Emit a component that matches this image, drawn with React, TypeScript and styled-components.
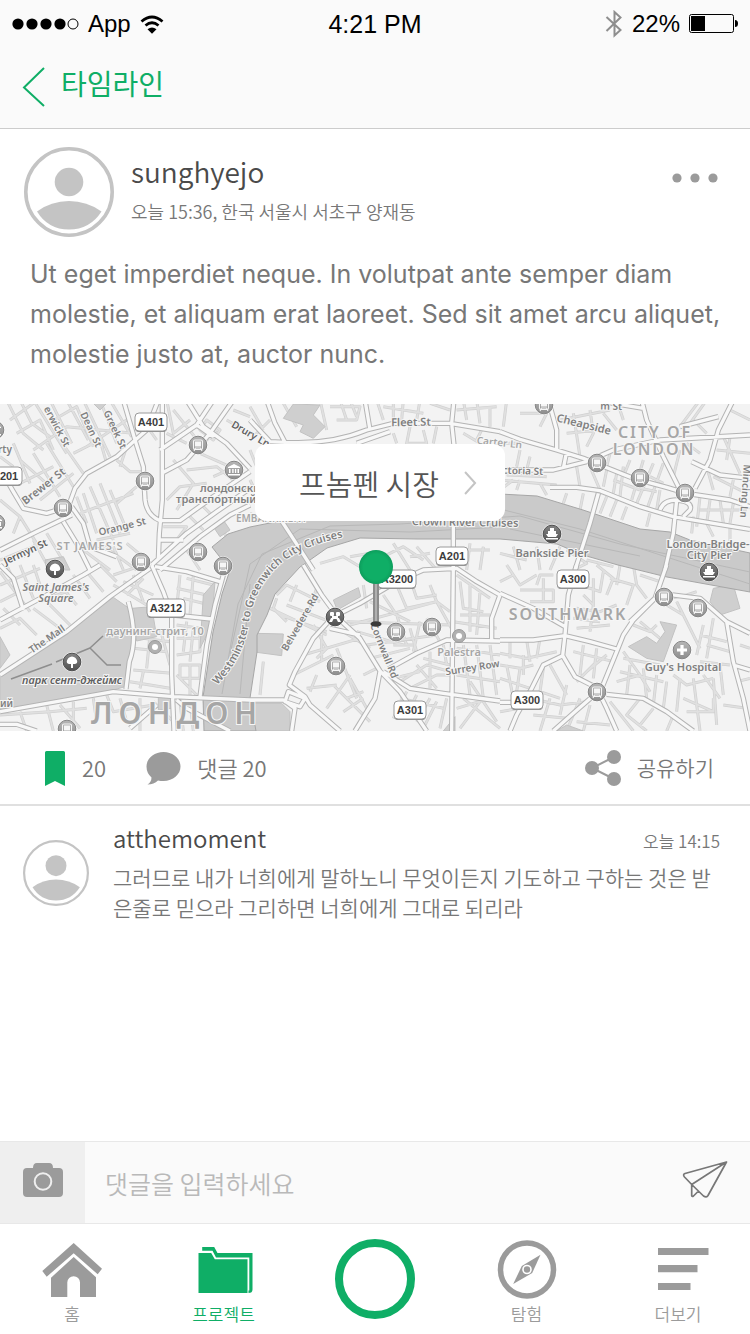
import React from "react";
import styled, { createGlobalStyle, css } from "styled-components";

const green = "#0fae66";
const grey = "#9b9b9b";
const korean = '"Noto Sans CJK KR", "Noto Sans", sans-serif';

const GlobalStyle = createGlobalStyle`
  *, *::before, *::after { box-sizing: border-box; }
  body {
    margin: 0;
    background: #ffffff;
    color: #777777;
    font-family: ${korean};
    font-weight: 350;
  }
  button, input { font: inherit; color: inherit; }
  p, h1, h2 { margin: 0; font-weight: inherit; }
`;

const Screen = styled.div`
  display: flex;
  flex-direction: column;
  min-height: 100vh;
`;

const buttonReset = css`
  border: 0;
  padding: 0;
  background: none;
  cursor: pointer;
`;

/* Header */

const Header = styled.header`
  background: #fafafa;
  border-bottom: 1px solid #cccccc;
`;

const StatusBar = styled.div`
  display: grid;
  grid-template-columns: 1fr auto 1fr;
  align-items: center;
  height: 48px;
  padding: 0 12px;
  color: #000000;
  font-family: "Liberation Sans", Arial, sans-serif;
  font-weight: 400;
  font-size: 24px;
  line-height: 32px;
`;

const StatusGroup = styled.div<{ $end?: boolean }>`
  display: flex;
  align-items: center;
  justify-content: ${(p) => (p.$end ? "flex-end" : "flex-start")};
  gap: 9px;
`;

const Clock = styled.span`
  font-size: 25px;
`;

const NavBar = styled.div`
  display: flex;
  align-items: center;
  height: 80px;
  padding: 0 22px;
`;

const BackButton = styled.button`
  ${buttonReset}
  display: flex;
  align-items: center;
  gap: 15px;
  color: ${green};
  font-size: 28px;
  font-weight: 400;
  line-height: 40px;
  padding-bottom: 2px;
`;

const BackLabel = styled.span`
  padding-bottom: 8px;
`;

/* Post */

const PostHeader = styled.div`
  display: flex;
  gap: 17px;
  padding: 18px 32px 0 24px;
`;

const Avatar = styled.svg`
  flex: none;
  display: block;
`;

const Author = styled.div`
  flex: 1;
  padding-top: 4px;
`;

const AuthorName = styled.h1`
  color: #4a4a4a;
  font-size: 28px;
  line-height: 40px;
`;

const Meta = styled.p`
  font-size: 18px;
  line-height: 24px;
  padding-top: 8px;
`;

const MoreButton = styled.button`
  ${buttonReset}
  align-self: flex-start;
  padding: 21px 0;
`;

const PostText = styled.p`
  padding: 17px 24px 30px 30px;
  font-family: Inter, "Liberation Sans", sans-serif;
  font-weight: 400;
  font-size: 25px;
  line-height: 40px;
`;

/* Map */

const MapPanel = styled.div`
  position: relative;
`;

const MapDrawing = styled.svg`
  display: block;
  width: 100%;
  height: 327px;
`;

const PlaceButton = styled.button`
  ${buttonReset}
  position: absolute;
  top: 40px;
  left: 50%;
  transform: translateX(-50%);
  margin-left: 5px;
  display: flex;
  align-items: center;
  gap: 24px;
  height: 77px;
  padding: 0 28px 0 44px;
  border-radius: 12px;
  background: #ffffff;
  color: #555555;
  font-size: 29px;
  white-space: nowrap;
`;

/* Actions */

const Actions = styled.div`
  display: flex;
  align-items: center;
  height: 75px;
  padding: 0 36px 0 44px;
  border-bottom: 2px solid #e0e0e0;
`;

const ActionButton = styled.button<{ $push?: boolean }>`
  ${buttonReset}
  display: flex;
  align-items: center;
  gap: 16px;
  margin-left: ${(p) => (p.$push ? "auto" : "0")};
  margin-right: ${(p) => (p.$push ? "0" : "40px")};
  font-size: ${(p) => (p.$push ? "21px" : "22px")};
  line-height: 32px;
`;

const ActionLabel = styled.span`
  padding-bottom: 2px;
`;

/* Comments */

const Comments = styled.section`
  flex: 1;
  padding: 15px 30px 18px 23px;
`;

const Comment = styled.article`
  display: flex;
  align-items: flex-start;
  gap: 24px;
`;

const CommentAvatar = styled.div`
  padding-top: 19px;
`;

const CommentBody = styled.div`
  flex: 1;
`;

const CommentHead = styled.div`
  display: flex;
  align-items: baseline;
  justify-content: space-between;
  line-height: 34px;
`;

const CommentName = styled.h2`
  color: #4a4a4a;
  font-size: 24px;
`;

const CommentTime = styled.time`
  font-size: 17px;
`;

const CommentText = styled.p`
  padding-top: 4px;
  font-size: 21px;
  line-height: 30px;
`;

/* Composer */

const Composer = styled.form`
  display: flex;
  height: 83px;
  border-top: 1px solid #e8e8e8;
  border-bottom: 1px solid #e8e8e8;
  background: #fafafa;
`;

const CameraButton = styled.button`
  ${buttonReset}
  flex: none;
  width: 85px;
  background: #efefef;
`;

const CommentInput = styled.input`
  flex: 1;
  min-width: 0;
  border: 0;
  outline: 0;
  padding: 0 20px;
  background: transparent;
  font-size: 25px;
  &::placeholder { color: #b9b9b9; opacity: 1; }
`;

const SendButton = styled.button`
  ${buttonReset}
  flex: none;
  padding: 0 22px;
`;

/* Tab bar */

const TabBar = styled.nav`
  display: flex;
  justify-content: space-between;
  height: 110px;
  padding: 15px 19px 0;
`;

const Tab = styled.a<{ $active?: boolean }>`
  display: flex;
  flex-direction: column;
  align-items: center;
  width: 106px;
  color: ${(p) => (p.$active ? green : grey)};
  font-size: 17px;
  line-height: 24px;
  text-decoration: none;
  gap: 3px;
`;

const RecordSlot = styled.div`
  display: flex;
  justify-content: center;
  width: 106px;
`;

const RecordButton = styled.button`
  ${buttonReset}
  width: 80px;
  height: 80px;
  border: 8px solid ${green};
  border-radius: 50%;
`;

const TabIcon = styled.svg.attrs({ width: 60, height: 60, viewBox: "0 0 60 60", "aria-hidden": true })`
  display: block;
  overflow: visible;
  fill: currentColor;
`;

function UserPicture({ size, ring }: { size: number; ring: number }) {
  return (
    <Avatar width={size} height={size} viewBox="0 0 90 90" aria-hidden>
      <circle cx="45" cy="45" r={45 - ring / 2} fill="#fff" stroke="#c4c4c4" strokeWidth={ring} />
      <circle cx="45" cy="35" r="14.3" fill="#c4c4c4" />
      <path d="M13 64.500Q27 54 45 54T77.500 64.500Q66 82.500 45 82.500T13 64.500Z" fill="#c4c4c4" />
    </Avatar>
  );
}

/* City map: six tiles of 750 x 510 units, drawn at a third of their size. */

type Tile = { x: number; y: number; minor: string; major: string; blocks?: string };

const tiles: Tile[] = [
  {
    x: 0,
    y: -4,
    major:
      "M370 0L405 120L430 200L435 300Q440 345 480 362H540L640 290L750 215M487 0V300L478 400L475 480M475 0L440 90L400 125L350 170L260 220L225 265L205 320L140 340L70 325L40 275L20 240M215 320L250 370L270 440L350 470M215 345L110 395L0 450M560 0L610 80L680 130L750 205M480 150L590 75L640 0M485 220L560 180L630 100L700 0M455 495L560 400L650 335L750 265M480 510L600 410L690 345L750 315M475 420H550M190 365L230 430L270 510M590 75L640 110",
    minor:
      "M20 0L70 100L130 150M60 0L95 70L150 110M30 60L100 10M50 100L120 60L160 150M100 0L200 160M150 0L215 130M160 60L230 20L280 140M200 0L265 120M250 0L330 170M300 0L350 130M330 0L395 110M100 150L200 80L400 100M40 130L90 250M60 180L150 260M100 160L180 290M140 130L220 260M180 120L250 220M220 160L300 120L320 190M260 140L380 60M160 200L60 250M120 300L220 220M230 290L260 370M250 280L290 400M270 260L340 420M300 250L360 400M330 270L380 390M350 310L410 260M240 340L400 280M290 420L390 400M350 180L390 215H430M380 140L360 200M420 50L470 120M500 0L520 100L570 60M500 100L560 130M520 180L580 250L530 330M500 300L540 260L620 250M560 210L650 200L700 240M600 160L690 200M640 230L730 190M600 310L640 350M560 340L610 390M490 380L560 380L530 420M520 30L600 130M650 90L600 140M680 60L750 100M700 30L750 50M620 60L660 90L640 120L600 90ZM0 170L40 200M0 300L60 350L40 400M60 350L110 430L70 470M100 420L150 510M140 400L200 500M0 480L100 440M300 430L410 510M380 430L440 480M250 450L330 510M340 440L370 510M560 450L600 510M650 370L680 410",
    blocks: "M270 0H330L300 30ZM640 380L670 360L690 390L660 410ZM135 480L190 470L210 510H140Z",
  },
  {
    x: 250,
    y: -4,
    major:
      "M50 0L75 70L105 127M0 60L60 125L105 127Q240 135 350 90L430 70H600L750 95M345 0L360 90M612 0L605 70L612 135M95 363L145 440L190 510M610 360V510M320 130L420 95",
    minor:
      "M0 20L40 90M10 110L60 60M100 10L140 80M210 0L230 90M240 20L330 20L320 60L260 60M270 0L290 60M300 0L320 50M380 0L400 60M400 20L520 40M430 0V60M460 0L455 60M510 0L500 60M540 10L600 30M430 100L440 130M480 80L470 130H530L520 90M560 80L550 130M640 0L650 60M620 30L740 20M680 0L690 70M700 80L680 120M640 100L690 130M720 20V80M0 150L20 200M0 240L20 280M0 340L60 370M300 470L360 460M400 470L460 440L520 480M430 430L480 510M500 440L560 510M350 510L420 490M640 450H720M660 430L650 510M700 440L690 510M480 470L540 460M210 490L280 470L330 500",
    blocks: "M100 55L130 12L210 15L190 45L225 80L190 115L150 95L160 75Z",
  },
  {
    x: 500,
    y: -4,
    major:
      "M0 95L60 118L170 150L250 175L300 195L400 235L500 262L560 280L690 300L750 320M0 210H160L260 185L340 150L480 120L750 105M425 0L440 60L490 170L540 270M700 0L655 90L630 180L585 265M150 262H230L300 272L420 320L520 350L640 370L750 388M295 280L270 370L225 510M530 300L520 400L495 510M145 0L170 90V150M280 0L430 25M540 80L655 50M575 185L660 225L750 235M200 155L190 205M480 330Q490 300 530 300Q580 305 570 330L550 350",
    minor:
      "M20 0L10 80M60 40H140L120 80M0 130H60M60 150L50 200M90 170L80 210M0 240L170 255M20 225L140 230M60 240L50 270M120 250L140 285M0 270L40 240M180 60L330 30M200 100L300 90M220 40L240 170M270 30L280 100L260 140M310 40L350 90M350 0L370 60M330 160L320 200M230 200L240 260M270 200L300 270M320 210L310 260M350 220L340 280M370 200L360 290M390 180L370 230M430 180L395 300M460 190L410 310M490 190L440 330M450 230L490 250M400 260L470 275M480 270L470 330M340 240L420 270M540 150L520 230M560 130L600 160M580 60L620 100M620 0L570 70M600 0L540 80M690 30L750 60M670 110L720 220M650 150L750 160M690 110L680 180M620 200L640 270M700 240L690 290M640 230L740 280M600 290L590 380M630 300L620 370M660 300L670 370M700 310L690 370M600 330H740M580 350L575 400M620 370L640 410M690 380V430M250 280L240 330M200 280L190 310M320 290L300 340M350 300L330 350M380 320L365 360M450 340L440 380M180 440L150 510M110 440L120 510M40 440L60 510M0 460L80 480M200 450L260 490L220 510M260 480L340 500",
  },
  {
    x: 0,
    y: 161,
    major:
      "M455 0L490 80L515 150V330L522 498M465 5L560 20L660 50M670 30L645 120L620 240L600 395M0 330L200 200L330 95L450 10M0 440L340 380L520 395L750 405M385 110Q415 220 388 290L378 372M520 150L635 162M70 135L40 40L0 0M0 165L140 90L250 30L300 0M0 478H50L110 498M530 405L560 430L690 498M470 420L390 490",
    minor:
      "M20 0L60 90M60 0L100 100M100 0L120 60M0 60L120 10M0 110L60 80M120 110L250 60M180 60L230 120M220 30L270 100M260 20L310 80M300 0L350 50M340 30L400 10M340 60L440 120M370 50L460 90M400 30L430 110M430 40L380 90M0 20L90 140M10 130L60 180M100 130L180 190M140 110L210 180M0 190L60 160L110 210M540 30L530 130M580 30L570 150M530 70L620 90M550 100L630 120M560 40L640 60M530 180L600 190V260L530 270M560 170L550 260M580 190L570 290M530 220H610M540 300H600V340H540ZM530 330L590 390M570 300V390M400 250L500 260M400 315L515 325M390 350L510 370M430 320L420 370M220 410V470M180 420L240 490M140 420L160 498M60 440L80 498M0 450L150 440L260 430M280 400L290 470M320 390L340 440L460 420M360 400L380 470M420 400V498M460 410L520 470M540 410L550 498M570 410L580 498M480 190L510 300M430 220L510 230M450 210L440 310",
    blocks:
      "M340 97L390 132L405 210L380 300L375 365L340 375L0 435V325L200 200ZM395 130L455 125L470 215L410 228ZM475 395H515V430L475 435ZM645 50L635 180L600 250L610 90ZM0 215L30 270L0 310ZM610 410H750V498H620Z",
  },
  {
    x: 250,
    y: 161,
    major:
      "M160 0L215 90L270 165L330 220L390 318L450 380L530 498M240 165L190 220L135 320L118 360L165 395L180 420L270 498M260 150L330 115L440 50L520 15L620 10L680 50L750 90M610 0L605 498M415 312L500 265L590 225L750 228M400 320L480 370L580 385L750 408M390 320L375 400L315 498M0 405H100L135 430L125 498M105 410L115 380L165 400L150 425ZM750 90L725 160V225M240 190L330 210",
    minor:
      "M80 90L110 60L210 110M90 150L230 200M80 100L70 130L110 170M110 120L240 170M140 60L120 110M60 130L230 210M200 70L180 130M215 210V290M190 180L230 250L200 280M160 270L330 220M130 330L250 270M280 200L360 250M260 250L320 400M170 370L260 360M200 330L180 380M230 430L300 330M250 360L360 470M290 400L340 380M340 330L380 310M300 340L350 430M280 440L340 400M350 130L340 60M290 170L600 180M300 180L560 110L540 60M320 200L460 240M360 110L480 170M400 90L440 150M440 60L470 130M480 40L500 100L560 90M470 130L560 110L600 140M480 190L500 260M440 150L470 240M510 170L490 260M530 160L570 230M560 110L610 200M360 280L480 250M430 240H490M350 240L560 210M620 30L720 100M630 50L640 130L700 140M660 60V200M690 80L680 210M630 150H720M610 170L740 190M450 350L530 300L600 320M480 370L560 330H610M430 340L510 320M500 300L560 370M520 280L600 300M540 260V370M580 240L590 300M450 400L580 430M470 380L430 460M500 390L470 450M540 400L500 470M560 410L520 490M590 400L570 490M620 250L750 270M640 240L660 390M680 240L700 400M720 240L740 390M620 330L750 350M640 400L750 490M660 350L740 470M620 430L720 400M630 490L690 410M40 290L30 390M60 430L90 470M20 450V498",
    blocks: "M250 105L325 68L332 95L262 135ZM20 205L100 207L95 272L20 262ZM580 498L615 455V498ZM0 415H95L120 440V498H0Z",
  },
  {
    x: 500,
    y: 161,
    major:
      "M230 0L205 90L195 210L188 272M188 272L130 300L90 380L50 450L30 498M188 272L225 335L290 368L320 430L350 498M500 0L465 100L400 165L370 210L350 260L305 370M300 375L225 440L160 498M320 388L430 400L500 440L580 498M0 225H100L195 212L270 230L350 252M505 88L600 100L680 170L750 205M680 170L700 290L730 400L750 498M700 300L750 315M0 85L100 130L195 185M0 412H40M390 170L470 95",
    minor:
      "M20 0L60 60L110 30M0 50L40 30M60 75H160V110H90M110 60L120 30H160M130 40V110M240 60L300 80L310 20M250 90L280 120V40M290 0L340 40L320 90M330 40L400 60L380 120M360 0L350 60M400 0L410 60L440 100M420 30L480 50M230 130L300 140L350 120M220 160L300 170M230 190L330 180M280 120L270 200M0 265L80 280L170 260M30 230V280M80 225L90 290M120 220L110 280M0 300L60 310L100 300M0 340L90 370M20 300L40 400M60 310L50 380M70 270V330M0 440L60 430M90 400L180 420L260 410M130 310L120 380L180 400M150 300L200 390M100 450L200 460M150 400L120 498M200 360L180 450M230 350L290 290M220 260L340 290M250 240L240 330M290 250L280 340M320 270L260 320M240 400L200 498M270 420L250 498M230 470L330 480M330 410L400 498M350 350L420 330L450 380M370 280L480 300M360 320L490 350M390 300L380 390M430 310L440 400M470 330L460 420M370 260L420 330M500 350L490 430M520 330L560 360L640 340M540 340L530 440M580 340L600 498M610 330L660 400M560 440H640V400M550 400L640 440M640 340L650 480M660 300L670 390M600 290L690 300M620 240L690 260M640 160L620 280M600 210L680 230M610 180L590 270M550 150L600 250M500 120L550 150L530 110M510 100L560 90L590 80M400 180L450 200L470 180M420 170L480 220M700 40L660 130M720 240L750 250M710 350L750 340M670 420L740 430M420 400L380 450L440 498M460 430L420 480M520 450L500 498",
    blocks: "M385 245L440 215L470 235L495 200L480 170L530 180L490 290L440 280ZM640 70L700 60L720 130L660 150L630 110ZM170 498H250L200 480Z",
  },
];

type LabelProps = {
  x: number;
  y: number;
  children: string;
  r?: number;
  size?: number;
  tone?: "dark" | "mid" | "light";
  italic?: boolean;
  anchor?: "start" | "middle" | "end";
  track?: number;
};

const tones = { dark: "#606060", mid: "#808080", light: "#a6a6a6" };

const MapText = styled.text`
  font-family: "Noto Sans", sans-serif;
  font-weight: 600;
  paint-order: stroke;
  stroke: #f6f6f6;
  stroke-width: 2px;
`;

function Label({ x, y, children, r = 0, size = 10, tone = "mid", italic, anchor = "middle", track }: LabelProps) {
  return (
    <MapText
      transform={`translate(${x} ${y}) rotate(${r})`}
      textAnchor={anchor}
      fontSize={size}
      fill={tones[tone]}
      fontStyle={italic ? "italic" : undefined}
      letterSpacing={track}
    >
      {children}
    </MapText>
  );
}

function Shield({ x, y, children }: { x: number; y: number; children: string }) {
  const w = children.length * 6 + 8;
  return (
    <g transform={`translate(${x} ${y})`}>
      <rect x={-w / 2} y="-8" width={w} height="18" rx="4" fill="#8d8d8d" />
      <rect x={-w / 2} y="-9" width={w} height="18" rx="4" fill="#fff" stroke="#9a9a9a" />
      <text y="4" textAnchor="middle" fontFamily="Liberation Sans, Arial, sans-serif" fontWeight="700" fontSize="11" fill="#3c3c3c">
        {children}
      </text>
    </g>
  );
}

type PoiKind = "train" | "tree" | "ship" | "museum" | "cross" | "dot" | "hub";

const darkKinds: PoiKind[] = ["tree", "ship", "hub"];

function Poi({ x, y, kind }: { x: number; y: number; kind: PoiKind }) {
  if (kind === "dot") {
    return (
      <g transform={`translate(${x} ${y})`}>
        <circle r="6.500" fill="#b0b0b0" stroke="#999" />
        <circle r="3" fill="#fff" />
      </g>
    );
  }
  return (
    <g transform={`translate(${x} ${y})`}>
      <circle r="10" fill="#fff" opacity="0.6" />
      <circle
        r="8.800"
        fill={darkKinds.includes(kind) ? "url(#poiDark)" : "url(#poiLight)"}
        stroke={darkKinds.includes(kind) ? "#4f4f4f" : "#858585"}
      />
      {kind === "train" && (
        <g fill="none" stroke="#f6f6f6" strokeWidth="1.100">
          <rect x="-4.500" y="-5" width="9" height="9.500" rx="1.500" />
          <rect x="-2.500" y="-3" width="5" height="4" fill="#f6f6f6" />
          <path d="M-2.500 3L-4 6M2.500 3L4 6M-3 3H3" />
        </g>
      )}
      {kind === "tree" && <path d="M-1 6V2H-3Q-6 1-5-1.500Q-4-5 0-5.500Q4-5 5-1.500Q6 1 3 2H1V6Z" fill="#fff" />}
      {kind === "ship" && <path d="M-2-6H2V-3H4V0H6L4 3H-4L-6 0H-4V-3H-2ZM-6 4H6V5.500H-6Z" fill="#fff" />}
      {kind === "museum" && <path d="M0-6L6-3V-2H-6V-3ZM-5-1H-3.500V3H-5ZM-1.800-1H-.400V3H-1.800ZM.900-1H2.200V3H.900ZM3.500-1H5V3H3.500ZM-6 4H6V5.500H-6Z" fill="#fff" />}
      {kind === "cross" && <path d="M-1.600-5H1.600V-1.600H5V1.600H1.600V5H-1.600V1.600H-5V-1.600H-1.600Z" fill="#fff" />}
      {kind === "hub" && (
        <g fill="#fff">
          <rect x="-5" y="-5" width="4" height="4" rx="1" />
          <rect x="1" y="-5" width="4" height="4" rx="1" />
          <rect x="-3" y="-1" width="6" height="3" />
          <path d="M-6 5L-4 1H-1L-3 5ZM6 5L4 1H1L3 5Z" />
        </g>
      )}
    </g>
  );
}

const trains = [
  [198, 41], [145, 77], [63, 104], [141, 158], [198, 148], [223, 162], [67, 325], [396, 228], [432, 223],
  [336, 262], [544, 1], [597, 59], [640, 74], [685, 89], [664, 193], [698, 204], [597, 288],
];

function CityMap() {
  const place = (t: Tile) => `translate(${t.x} ${t.y}) scale(0.333333)`;
  return (
    <MapDrawing viewBox="0 0 750 327" preserveAspectRatio="xMidYMid slice" role="img" aria-label="London">
      <defs>
        <linearGradient id="poiLight" x2="0" y2="1">
          <stop offset="0" stopColor="#b6b6b6" />
          <stop offset="1" stopColor="#8e8e8e" />
        </linearGradient>
        <linearGradient id="poiDark" x2="0" y2="1">
          <stop offset="0" stopColor="#858585" />
          <stop offset="1" stopColor="#505050" />
        </linearGradient>
        <radialGradient id="pinHead">
          <stop offset="0.75" stopColor={green} />
          <stop offset="1" stopColor="#0d9d5c" />
        </radialGradient>
        <path id="cruiseLine" d="M217 281Q242 256 248 224Q252 188 276 164Q299 141 350 132" />
      </defs>
      <rect width="750" height="327" fill="#f3f3f3" />
      <g fill="none" strokeLinejoin="round">
        {tiles.map((t, i) => (
          <g key={i} transform={place(t)}>
            <path d={t.minor} stroke="#d0d0d0" strokeWidth="9" />
            <path d={t.minor} stroke="#e0e0e0" strokeWidth="5" />
          </g>
        ))}
        {tiles.map((t, i) => (
          <path key={i} transform={place(t)} d={t.blocks} fill="#cfcfcf" stroke="#c2c2c2" strokeWidth="3" />
        ))}
        <path d="M204 327L203 293L213 228L222 190L230 166L212 143L228 130L250 123L280 117L310 111H400L500 90L537 92L583 106L640 125L670 128L690 136L750 149V188L667 173L618 161L583 151L557 140L500 135H417L360 134L327 144L300 163L275 190L267 211L257 231V248L250 294L256 327Z" fill="#cacaca" stroke="#a6a6a6" />
        <path d="M222 290L238 200L262 150L330 122L400 120L520 112L620 140L750 168M240 290L250 180M500 105L580 125L750 180M510 125L640 152M230 250L250 160L300 125L410 128L520 122" stroke="#b8b8b8" strokeWidth="1" />
        {tiles.map((t, i) => (
          <path key={i} transform={place(t)} d={t.major} stroke="#b4b4b4" strokeWidth="16" />
        ))}
        {tiles.map((t, i) => (
          <path key={i} transform={place(t)} d={t.major} stroke="#f8f8f8" strokeWidth="10" />
        ))}
        <path d="M11 275L52 260M56 258L90 244L103 232M90 244L107 261H121" stroke="#8e8e8e" strokeWidth="1.500" />
      </g>

      <Label x={54} y={24} r={62}>erwick St</Label>
      <Label x={88} y={27} r={65}>Dean St</Label>
      <Label x={112} y={27} r={65}>Greek St</Label>
      <Label x={46} y={85} r={-38} size={11}>Brewer St</Label>
      <Label x={123} y={126} r={-14}>Orange St</Label>
      <Label x={27} y={151} r={-25} tone="dark">Jermyn St</Label>
      <Label x={90} y={146} size={11} tone="light" track={1}>ST JAMES'S</Label>
      <Label x={-2} y={49} anchor="start">rty</Label>
      <Label x={249} y={33} r={30} tone="dark">Drury Ln</Label>
      <Label x={200} y={88} anchor="start" size={11}>лондонский</Label>
      <Label x={176} y={99} anchor="start" size={11}>транспортный</Label>
      <Label x={236} y={118} anchor="start" tone="light">EMBANKMENT</Label>
      <Label x={411} y={22} r={-1} size={11}>Fleet St</Label>
      <Label x={499} y={42} r={6} tone="light">Carter Ln</Label>
      <Label x={465} y={122} r={1} size={11}>Crown River Cruises</Label>
      <Label x={543} y={71} r={2} anchor="end">Queen Victoria St</Label>
      <Label x={583} y={24} r={14} size={11}>Cheapside</Label>
      <Label x={622} y={6} r={1} anchor="end">m St</Label>
      <Label x={655} y={34} size={16} tone="light" track={2}>CITY OF</Label>
      <Label x={654} y={51} size={16} tone="light" track={2}>LONDON</Label>
      <Label x={742} y={87} r={94}>Mincing Ln</Label>
      <Label x={552} y={153} size={11}>Bankside Pier</Label>
      <Label x={708} y={144} size={11}>London-Bridge-</Label>
      <Label x={709} y={155} size={11}>City Pier</Label>
      <Label x={56} y={187} size={11} italic>Saint James's</Label>
      <Label x={56} y={198} size={11} italic>Square</Label>
      <Label x={49} y={238} r={-35}>The Mall</Label>
      <Label x={155} y={231} size={11} tone="light">даунинг-стрит, 10</Label>
      <Label x={72} y={280} size={11} italic tone="dark">парк сент-джеймс</Label>
      <Label x={0} y={303} anchor="start">ий</Label>
      <Label x={177} y={320} size={30} tone="light" track={6}>ЛОНДОН</Label>
      <Label x={303} y={220} r={-60}>Belvedere Rd</Label>
      <Label x={381} y={248} r={68}>Cornwall Rd</Label>
      <Label x={459} y={252} size={11} tone="light">Palestra</Label>
      <Label x={473} y={267} r={-9}>Surrey Row</Label>
      <Label x={568} y={216} size={16} tone="light" track={2}>SOUTHWARK</Label>
      <Label x={683} y={267} size={11}>Guy's Hospital</Label>
      <MapText fontSize="11" fill={tones.mid}>
        <textPath href="#cruiseLine">Westminster to Greenwich City Cruises</textPath>
      </MapText>

      {trains.map(([x, y]) => <Poi key={`${x}-${y}`} x={x} y={y} kind="train" />)}
      <Poi x={-5} y={26} kind="museum" />
      <Poi x={-4} y={119} kind="museum" />
      <Poi x={234} y={66} kind="museum" />
      <Poi x={55} y={165} kind="tree" />
      <Poi x={72} y={258} kind="tree" />
      <Poi x={335} y={213} kind="hub" />
      <Poi x={552} y={130} kind="ship" />
      <Poi x={709} y={168} kind="ship" />
      <Poi x={682} y={246} kind="cross" />
      <Poi x={155} y={243} kind="dot" />
      <Poi x={459} y={232} kind="dot" />

      <Shield x={151} y={18}>A401</Shield>
      <Shield x={6} y={72}>4201</Shield>
      <Shield x={166} y={204}>A3212</Shield>
      <Shield x={452} y={152}>A201</Shield>
      <Shield x={397} y={175}>A3200</Shield>
      <Shield x={573} y={175}>A300</Shield>
      <Shield x={527} y={296}>A300</Shield>
      <Shield x={410} y={306}>A301</Shield>

      <rect x="373" y="176" width="6" height="43" fill="#8c8c8c" />
      <rect x="375" y="176" width="2" height="43" fill="#b0b0b0" />
      <ellipse cx="376" cy="220" rx="5.500" ry="2.800" fill="#3a3a3a" />
      <circle cx="376" cy="163" r="17" fill="url(#pinHead)" />
    </MapDrawing>
  );
}

export default function App() {
  return (
    <Screen>
      <GlobalStyle />
      <Header>
        <StatusBar>
          <StatusGroup>
            <svg width="67" height="12" viewBox="0 0 67 12" aria-hidden>
              {[6, 20, 34, 48].map((x) => <circle key={x} cx={x} cy="6" r="5.600" />)}
              <circle cx="61" cy="6" r="5" fill="none" stroke="#000" />
            </svg>
            <span>App</span>
            <svg width="24" height="19" viewBox="0 0 24 19" aria-hidden>
              <path d="M1.500 6.500Q12-2.500 22.500 6.500M5.500 10.500Q12 5 18.500 10.500" fill="none" stroke="#000" strokeWidth="2.800" />
              <path d="M7.500 14.300Q12 10.800 16.500 14.300L12 18.800Z" />
            </svg>
          </StatusGroup>
          <Clock>4:21 PM</Clock>
          <StatusGroup $end>
            <svg width="18" height="28" viewBox="0 0 18 28" aria-hidden>
              <path d="M1.500 7L15.500 20L9.500 25.500V2L15.500 7.500L1.500 21" fill="none" stroke="#8e8e8e" strokeWidth="2" />
            </svg>
            <span>22%</span>
            <svg width="49" height="20" viewBox="0 0 49 20" aria-hidden>
              <rect x="0.500" y="0.500" width="44" height="18" rx="2" fill="none" stroke="#000" />
              <path d="M2 2H16V17H2ZM46 6Q49 6 49 9.500T46 13Z" />
            </svg>
          </StatusGroup>
        </StatusBar>
        <NavBar>
          <BackButton type="button">
            <svg width="24" height="40" viewBox="0 0 24 40" aria-hidden>
              <path d="M22 1L2 20.500L22 39" fill="none" stroke={green} strokeWidth="2" />
            </svg>
            <BackLabel>타임라인</BackLabel>
          </BackButton>
        </NavBar>
      </Header>

      <main>
        <PostHeader>
          <UserPicture size={90} ring={3.600} />
          <Author>
            <AuthorName>sunghyejo</AuthorName>
            <Meta>오늘 15:36, 한국 서울시 서초구 양재동</Meta>
          </Author>
          <MoreButton type="button" aria-label="더보기">
            <svg width="46" height="20" viewBox="0 0 46 20" fill={grey} aria-hidden>
              <circle cx="5" cy="10" r="4.600" />
              <circle cx="23" cy="10" r="4.600" />
              <circle cx="41" cy="10" r="4.600" />
            </svg>
          </MoreButton>
        </PostHeader>
        <PostText>
          Ut eget imperdiet neque. In volutpat ante semper diam molestie, et aliquam erat laoreet. Sed sit amet arcu
          aliquet, molestie justo at, auctor nunc.
        </PostText>
        <MapPanel>
          <CityMap />
          <PlaceButton type="button">
            프놈펜 시장
            <svg width="14" height="24" viewBox="0 0 14 24" aria-hidden>
              <path d="M2 1L12 12L2 23" fill="none" stroke="#c4c4c4" strokeWidth="2" />
            </svg>
          </PlaceButton>
        </MapPanel>
        <Actions>
          <ActionButton type="button" aria-label="북마크 20">
            <svg width="22" height="36" viewBox="0 0 22 36" aria-hidden>
              <path d="M1 2.500Q1 1 2.500 1H19.500Q21 1 21 2.500V36L11 31L1 36Z" fill={green} />
            </svg>
            <ActionLabel>20</ActionLabel>
          </ActionButton>
          <ActionButton type="button">
            <svg width="35" height="34" viewBox="0 0 35 34" aria-hidden>
              <path d="M17.500 1C27 1 34.500 7.500 34.500 15.500S27 30 17.500 30Q14.500 30 12 29.500Q8 33.500 1.500 33.500Q5.500 31 5.500 26.500Q.500 22 .500 15.500C.500 7.500 8 1 17.500 1Z" fill={grey} />
            </svg>
            <ActionLabel>댓글 20</ActionLabel>
          </ActionButton>
          <ActionButton type="button" $push>
            <svg width="36" height="36" viewBox="0 0 36 36" fill={grey} aria-hidden>
              <path d="M29 7L7 18L29 29" fill="none" stroke={grey} strokeWidth="2" />
              <circle cx="7" cy="18" r="7" />
              <circle cx="29" cy="7" r="7" />
              <circle cx="29" cy="29" r="7" />
            </svg>
            <ActionLabel>공유하기</ActionLabel>
          </ActionButton>
        </Actions>
      </main>

      <Comments aria-label="댓글">
        <Comment>
          <CommentAvatar>
            <UserPicture size={66} ring={3} />
          </CommentAvatar>
          <CommentBody>
            <CommentHead>
              <CommentName>atthemoment</CommentName>
              <CommentTime>오늘 14:15</CommentTime>
            </CommentHead>
            <CommentText>
              그러므로 내가 너희에게 말하노니 무엇이든지 기도하고 구하는 것은 받은줄로 믿으라 그리하면 너희에게 그대로
              되리라
            </CommentText>
          </CommentBody>
        </Comment>
      </Comments>

      <Composer onSubmit={(e: React.FormEvent) => e.preventDefault()}>
        <CameraButton type="button" aria-label="사진">
          <svg width="40" height="34" viewBox="0 0 40 34" aria-hidden>
            <path d="M4 5H10Q10 0 14 0H26Q30 0 30 5H36Q40 5 40 9V30Q40 34 36 34H4Q0 34 0 30V9Q0 5 4 5Z" fill={grey} />
            <circle cx="20" cy="18.500" r="8.300" fill="none" stroke="#efefef" strokeWidth="2" />
          </svg>
        </CameraButton>
        <CommentInput type="text" aria-label="댓글" placeholder="댓글을 입력하세요" />
        <SendButton type="submit" aria-label="보내기">
          <svg width="46" height="38" viewBox="0 0 46 38" fill="none" stroke="#777" strokeWidth="1.700" strokeLinejoin="round" aria-hidden>
            <path d="M44.500 1L3 12.500Q.500 13.500 2.500 16L9.700 23.500L21.500 35Q24.500 37 26 34.500ZM44.500 1L9.700 23.500V34.500Q10 36 11.500 35L16.500 30" />
          </svg>
        </SendButton>
      </Composer>

      <TabBar>
        <Tab href="#home">
          <TabIcon>
            <path d="M31.700 4L60 29.700L55.700 35.300L31.700 14.300L4.700 37.700L.300 32Z" />
            <path d="M31.700 18L54 38.300V58H38V43.500A6.300 6.300 0 0 0 25.300 43.500V58H9V38.700Z" />
          </TabIcon>
          홈
        </Tab>
        <Tab href="#project" $active>
          <TabIcon>
            <path d="M4.500 14H17.200L20.800 20.300H53.500V54H4.500Z" />
            <path d="M8.200 8H20.200L23.500 14H58.500V50.500Q58.500 54 54.500 54V51.500H55.300V18.500H22L18.500 11.700H8.200Z" />
          </TabIcon>
          프로젝트
        </Tab>
        <RecordSlot>
          <RecordButton type="button" aria-label="기록" />
        </RecordSlot>
        <Tab href="#explore">
          <TabIcon>
            <circle cx="30" cy="30.500" r="26.500" fill="none" stroke="currentColor" strokeWidth="5.500" />
            <path d="M43.500 15.700L35.200 34L16.200 45L24.800 27Z" />
            <circle cx="30" cy="30.500" r="4" stroke="#fff" strokeWidth="1.600" />
          </TabIcon>
          탐험
        </Tab>
        <Tab href="#more">
          <TabIcon>
            <path d="M10 9H60.500V16H10ZM10 26H49.500V33.300H10ZM10 44H42.500V51H10Z" />
          </TabIcon>
          더보기
        </Tab>
      </TabBar>
    </Screen>
  );
}
